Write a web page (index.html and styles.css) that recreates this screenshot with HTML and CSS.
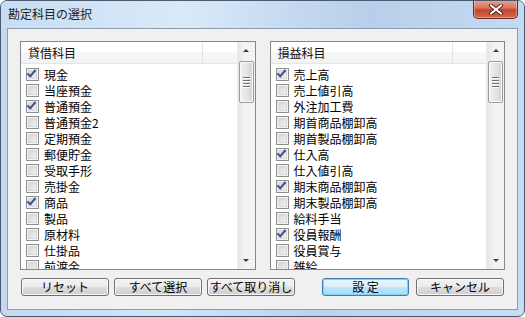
FILE: index.html
```html
<!DOCTYPE html>
<html lang="ja">
<head>
  <meta charset="utf-8">
  <title>勘定科目の選択</title>
<link rel="stylesheet" href="styles.css">
</head>
<body>
  <div class="window">
    <div class="titlebar">
      <p class="title">勘定科目の選択</p>
      <div class="close-btn">
        <svg width="14" height="11" viewBox="0 0 14 11"><path d="M2 1.5 L12 9.5 M12 1.5 L2 9.5" stroke="#5a1a10" stroke-width="4" stroke-linecap="round"/><path d="M2 1.5 L12 9.5 M12 1.5 L2 9.5" stroke="#fff" stroke-width="2.2" stroke-linecap="round"/></svg>
      </div>
    </div>

    <div class="client">
      <div class="lists">

        <div class="listbox">
          <div class="list-main">
            <div class="list-header"><span class="col-head">貸借科目</span><span class="col-rest"></span></div>
            <ul class="rows">
              <li class="row"><span class="chk on"></span>現金</li>
              <li class="row"><span class="chk"></span>当座預金</li>
              <li class="row"><span class="chk on"></span>普通預金</li>
              <li class="row"><span class="chk"></span>普通預金2</li>
              <li class="row"><span class="chk"></span>定期預金</li>
              <li class="row"><span class="chk"></span>郵便貯金</li>
              <li class="row"><span class="chk"></span>受取手形</li>
              <li class="row"><span class="chk"></span>売掛金</li>
              <li class="row"><span class="chk on"></span>商品</li>
              <li class="row"><span class="chk"></span>製品</li>
              <li class="row"><span class="chk"></span>原材料</li>
              <li class="row"><span class="chk"></span>仕掛品</li>
              <li class="row"><span class="chk"></span>前渡金</li>
            </ul>
          </div>
          <div class="scrollbar">
            <span class="arrow up"></span>
            <div class="track"><span class="thumb"><i></i><i></i><i></i><i></i></span></div>
            <span class="arrow down"></span>
          </div>
        </div>

        <div class="listbox">
          <div class="list-main">
            <div class="list-header"><span class="col-head">損益科目</span><span class="col-rest"></span></div>
            <ul class="rows">
              <li class="row"><span class="chk on"></span>売上高</li>
              <li class="row"><span class="chk"></span>売上値引高</li>
              <li class="row"><span class="chk"></span>外注加工費</li>
              <li class="row"><span class="chk"></span>期首商品棚卸高</li>
              <li class="row"><span class="chk"></span>期首製品棚卸高</li>
              <li class="row"><span class="chk on"></span>仕入高</li>
              <li class="row"><span class="chk"></span>仕入値引高</li>
              <li class="row"><span class="chk on"></span>期末商品棚卸高</li>
              <li class="row"><span class="chk"></span>期末製品棚卸高</li>
              <li class="row"><span class="chk"></span>給料手当</li>
              <li class="row"><span class="chk on"></span>役員報酬</li>
              <li class="row"><span class="chk"></span>役員賞与</li>
              <li class="row"><span class="chk"></span>雑給</li>
            </ul>
          </div>
          <div class="scrollbar">
            <span class="arrow up"></span>
            <div class="track"><span class="thumb"><i></i><i></i><i></i><i></i></span></div>
            <span class="arrow down"></span>
          </div>
        </div>

      </div>

      <div class="buttons">
        <button class="btn">リセット</button>
        <button class="btn">すべて選択</button>
        <button class="btn">すべて取り消し</button>
        <button class="btn btn-default">設 定</button>
        <button class="btn">キャンセル</button>
      </div>
    </div>
  </div>
</body>
</html>
```

FILE: styles.css
```css
body,
.rows,
.title {
  margin: 0;
  padding: 0;
}

body {
  background: #fff;
  font-family: "Noto Sans CJK JP", "Noto Sans", sans-serif;
  font-size: 12px;
  color: #000;
}

.window {
  box-sizing: border-box;
  width: 525px;
  height: 317px;
  display: flex;
  flex-direction: column;
  border: 1px solid #4b5b6e;
  border-radius: 7px;
  background: linear-gradient(to right, #c3d8ee, #d3e5f7 30%, #bcd3ec 60%, #c9ddf2);
  overflow: hidden;
}

/* title bar */

.titlebar {
  height: 28px;
  display: flex;
  align-items: flex-start;
  justify-content: space-between;
  background: linear-gradient(to right, #c8ddf3, #d9e9f9 35%, #b7cfea 70%, #c4daf1);
}

.title {
  padding: 5px 0 0 7px;
  font-size: 12px;
  line-height: 16px;
  color: #1e1e1e;
}

.close-btn {
  box-sizing: border-box;
  width: 45px;
  height: 19px;
  margin: -1px 6px 0 0;
  display: flex;
  align-items: center;
  justify-content: center;
  border: 1px solid #6a2a1e;
  border-top: none;
  border-radius: 0 0 5px 5px;
  background: linear-gradient(#e9a896, #d8725c 45%, #c3432b 55%, #d06c4e);
  box-shadow: inset 0 0 0 1px rgba(255, 255, 255, .35);
}

/* client area */

.client {
  flex: 1;
  margin: 0 6px 6px 6px;
  display: flex;
  flex-direction: column;
  border: 1px solid #8b9db3;
  background: #f0f0f0;
  padding: 12px 12px 13px 12px;
}

.lists {
  display: grid;
  grid-template-columns: 1fr 1fr;
  gap: 14px;
  height: 229px;
}

.listbox {
  display: flex;
  border: 1px solid #828790;
  background: #fff;
  overflow: hidden;
}

.list-main {
  flex: 1;
  display: flex;
  flex-direction: column;
  overflow: hidden;
}

.list-header {
  height: 21px;
  display: flex;
  border-bottom: 1px solid #e5e5e5;
  background: linear-gradient(#fff 50%, #f6f7f8 50%, #f1f2f4);
  line-height: 21px;
}

.col-head {
  width: 174px;
  padding-left: 7px;
  border-right: 1px solid #e2e3e5;
  color: #111;
}

.col-rest { flex: 1; }

.rows {
  list-style: none;
  padding-top: 2px;
}

.row {
  display: flex;
  align-items: center;
  height: 16px;
  padding-left: 5px;
  white-space: nowrap;
}

/* checkboxes */

.chk {
  box-sizing: border-box;
  width: 13px;
  height: 13px;
  margin-right: 5px;
  border: 1px solid #8f8f8f;
  background: linear-gradient(135deg, #d2d2d2, #f4f4f4);
  box-shadow: inset 0 0 0 1px #f4f4f4, inset 0 0 0 2px #d7d7d7;
  position: relative;
}

.chk.on::after {
  content: "";
  position: absolute;
  left: 2px;
  top: -1px;
  width: 3px;
  height: 7px;
  border: solid #3a5487;
  border-width: 0 2px 2px 0;
  transform: rotate(40deg);
}

/* scrollbar */

.scrollbar {
  width: 17px;
  display: flex;
  flex-direction: column;
  background: linear-gradient(to right, #e6e6e6, #f3f3f3 40%, #f3f3f3);
  border-left: 1px solid #ececec;
}

.arrow {
  height: 17px;
  display: flex;
  align-items: center;
  justify-content: center;
}

.arrow::before {
  content: "";
  border-left: 3px solid transparent;
  border-right: 3px solid transparent;
}

.arrow.up::before { border-bottom: 3px solid #3c3c3c; }
.arrow.down::before { border-top: 3px solid #3c3c3c; }

.track {
  flex: 1;
  padding-top: 2px;
}

.thumb {
  box-sizing: border-box;
  margin: 0 1px;
  height: 42px;
  display: flex;
  flex-direction: column;
  align-items: center;
  justify-content: center;
  gap: 1px;
  border: 1px solid #9b9b9b;
  border-radius: 2px;
  background: linear-gradient(to right, #f2f2f2, #e4e4e4 50%, #d4d4d4);
  box-shadow: inset 0 0 0 1px #fafafa;
}

.thumb i {
  display: block;
  width: 7px;
  height: 1px;
  background: #6f6f6f;
  border-bottom: 1px solid #fff;
}

/* buttons */

.buttons {
  display: flex;
  gap: 5px;
  margin-top: 8px;
  padding-left: 1px;
}

.btn {
  width: 88px;
  height: 18px;
  padding: 0;
  font-family: inherit;
  font-size: 12px;
  line-height: 16px;
  color: #000;
  border: 1px solid #707070;
  border-radius: 3px;
  background: linear-gradient(#f2f2f2, #ebebeb 50%, #dddddd 50%, #cfcfcf);
  box-shadow: inset 0 0 0 1px rgba(255, 255, 255, .8);
}

.btn-default {
  width: 87px;
  margin-left: 22px;
  margin-right: 2px;
  border-color: #3c7fb1;
  background: linear-gradient(#eaf6fd, #d9f0fc 50%, #bee6fd 50%, #a7d9f5);
  box-shadow: inset 0 0 0 1px #7fd2f5;
}
```
